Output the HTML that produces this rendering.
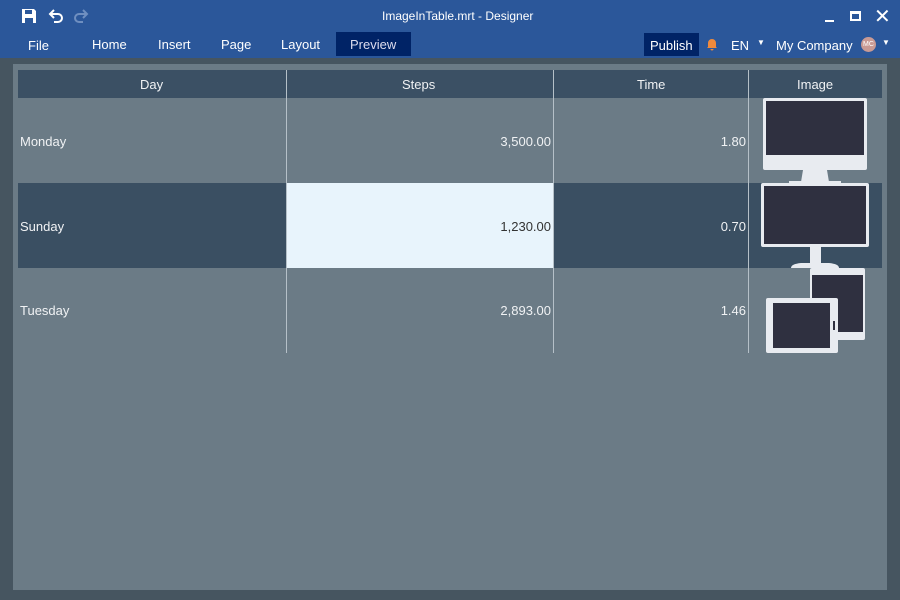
<!DOCTYPE html>
<html><head><style>
*{margin:0;padding:0;box-sizing:border-box}
body{width:900px;height:600px;overflow:hidden;background:#465560;font-family:"Liberation Sans",sans-serif;position:relative}
.top{position:absolute;left:0;top:0;width:900px;height:58px;background:#2b579a;color:#fff}
.a{position:absolute;font-size:13px;white-space:nowrap}
.page{position:absolute;left:13px;top:64px;width:874px;height:526px;background:#6b7b86}
.c{position:absolute;color:#f0f2f4;font-size:13px;line-height:16px}
.vl{position:absolute;width:1px;background:#b5c0c8}
</style></head><body>
<div class="top">
<svg style="position:absolute;left:21px;top:8px" width="16" height="16" viewBox="0 0 16 16"><path d="M1 1h12l2 2v12H1z" fill="#fff"/><rect x="4" y="2" width="7" height="4" fill="#2b579a"/><rect x="4" y="10" width="8" height="5" fill="#2b579a"/></svg>
<svg style="position:absolute;left:48px;top:8px" width="16" height="16" viewBox="0 0 16 16"><path d="M3 6h7a4 4 0 0 1 0 8H6" fill="none" stroke="#fff" stroke-width="2"/><path d="M6 2L2 6l4 4" fill="none" stroke="#fff" stroke-width="2"/></svg>
<svg style="position:absolute;left:73px;top:8px" width="16" height="16" viewBox="0 0 16 16"><path d="M13 6H6a4 4 0 0 0 0 8h4" fill="none" stroke="#6f8fc0" stroke-width="2"/><path d="M10 2l4 4-4 4" fill="none" stroke="#6f8fc0" stroke-width="2"/></svg>
<div class="a" style="left:382px;top:9px;font-size:12px">ImageInTable.mrt - Designer</div>
<div style="position:absolute;left:825px;top:20px;width:9px;height:2px;background:#fff"></div>
<div style="position:absolute;left:850px;top:11px;width:11px;height:10px;border:2px solid #fff;border-top-width:3px"></div>
<div class="a" style="left:874px;top:4px;font-size:20px">✕</div>
<div class="a" style="left:28px;top:38px">File</div>
<div class="a" style="left:92px;top:37px">Home</div>
<div class="a" style="left:158px;top:37px">Insert</div>
<div class="a" style="left:221px;top:37px">Page</div>
<div class="a" style="left:281px;top:37px">Layout</div>
<div style="position:absolute;left:336px;top:32px;width:75px;height:24px;background:#002366"></div>
<div class="a" style="left:350px;top:37px;color:#dde">Preview</div>
<div style="position:absolute;left:644px;top:33px;width:55px;height:23px;background:#002366"></div>
<div class="a" style="left:650px;top:38px">Publish</div>
<svg style="position:absolute;left:706px;top:38px" width="12" height="13" viewBox="0 0 12 13"><path d="M6 1a4 4 0 0 1 4 4v4l1 1H1l1-1V5a4 4 0 0 1 4-4zM4.5 11h3a1.5 1.5 0 0 1-3 0z" fill="#f08a3c"/></svg>
<div class="a" style="left:731px;top:38px">EN</div>
<div class="a" style="left:757px;top:38px;font-size:8px">▼</div>
<div class="a" style="left:776px;top:38px">My Company</div>
<div style="position:absolute;left:861px;top:37px;width:15px;height:15px;border-radius:50%;background:#c99a94;color:#fff;font-size:7px;text-align:center;line-height:15px">MC</div>
<div class="a" style="left:882px;top:38px;font-size:8px">▼</div>
</div>
<div class="page"></div>
<div style="position:absolute;left:18px;top:70px;width:864px;height:28px;background:#3b5064"></div>
<div style="position:absolute;left:18px;top:183px;width:864px;height:85px;background:#3a4f62"></div>
<div style="position:absolute;left:286px;top:183px;width:267px;height:85px;background:#e8f4fc"></div>
<div class="vl" style="left:286px;top:70px;height:283px"></div>
<div class="vl" style="left:553px;top:70px;height:283px"></div>
<div class="vl" style="left:748px;top:70px;height:283px"></div>
<div class="c" style="left:140px;top:77px">Day</div>
<div class="c" style="left:402px;top:77px">Steps</div>
<div class="c" style="left:637px;top:77px">Time</div>
<div class="c" style="left:797px;top:77px">Image</div>
<div class="c" style="left:20px;top:134px">Monday</div>
<div class="c" style="left:20px;top:219px">Sunday</div>
<div class="c" style="left:20px;top:303px">Tuesday</div>
<div class="c" style="left:286px;width:265px;text-align:right;top:134px">3,500.00</div>
<div class="c" style="left:286px;width:265px;text-align:right;top:219px;color:#333">1,230.00</div>
<div class="c" style="left:286px;width:265px;text-align:right;top:303px">2,893.00</div>
<div class="c" style="left:553px;width:193px;text-align:right;top:134px">1.80</div>
<div class="c" style="left:553px;width:193px;text-align:right;top:219px">0.70</div>
<div class="c" style="left:553px;width:193px;text-align:right;top:303px">1.46</div>
<svg style="position:absolute;left:0;top:0" width="900" height="600">
<g fill="#e8ebf0">
<rect x="763" y="98" width="104" height="72" rx="2"/><path d="M803 170h24l2 12h-28z"/><rect x="789" y="181" width="52" height="2"/>
<rect x="761" y="183" width="108" height="64" rx="2"/><rect x="810" y="247" width="11" height="16"/><path d="M791 268q0-4 10-5h28q10 1 10 5z"/>
<rect x="810" y="268" width="55" height="72" rx="2"/>
</g>
<g fill="#2f3040">
<rect x="766" y="101" width="98" height="54"/>
<rect x="764" y="186" width="102" height="58"/>
<rect x="812" y="275" width="51" height="57"/>
</g>
<rect x="766" y="298" width="72" height="55" rx="2" fill="#e8ebf0"/>
<rect x="773" y="303" width="57" height="45" fill="#2f3040"/>
<rect x="833" y="321" width="2" height="9" fill="#2f3040"/>
</svg>
</body></html>
